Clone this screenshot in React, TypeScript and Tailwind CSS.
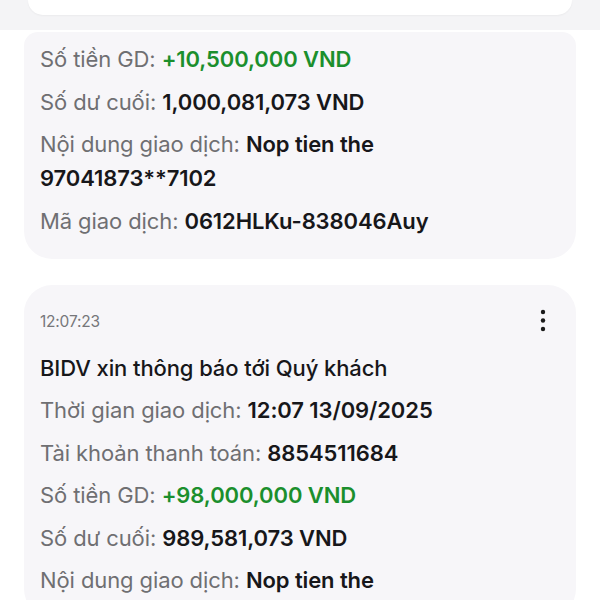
import React from 'react';

type Row = { label: string; value: string; green?: boolean };

const card1: Row[] = [
  { label: 'Số tiền GD:', value: '+10,500,000 VND', green: true },
  { label: 'Số dư cuối:', value: '1,000,081,073 VND' },
  { label: 'Nội dung giao dịch:', value: 'Nop tien the 97041873**7102' },
  { label: 'Mã giao dịch:', value: '0612HLKu-838046Auy' },
];

const card2: Row[] = [
  { label: 'Thời gian giao dịch:', value: '12:07 13/09/2025' },
  { label: 'Tài khoản thanh toán:', value: '8854511684' },
  { label: 'Số tiền GD:', value: '+98,000,000 VND', green: true },
  { label: 'Số dư cuối:', value: '989,581,073 VND' },
  { label: 'Nội dung giao dịch:', value: 'Nop tien the' },
];

function InfoRow({ row }: { row: Row }) {
  const color = row.green ? 'text-[#1b8f2d]' : 'text-[#17171a]';
  const parts = row.value.length > 20 ? [row.value.slice(0, 12), row.value.slice(13)] : [row.value];
  return (
    <p className="text-[22px] leading-[34px] tracking-[-0.1px]">
      <span className="text-[#6f6f72]">{row.label}</span>{' '}
      {parts.map((p, i) => (
        <React.Fragment key={i}>
          {i > 0 && ' '}
          <span className={`font-semibold ${color}`}>{p}</span>
        </React.Fragment>
      ))}
    </p>
  );
}

// nút ba chấm
function MoreDots() {
  return (
    <svg width="8" height="26" viewBox="0 0 8 26" className="text-[#1a1a1a]">
      <circle cx="4" cy="4" r="2.2" fill="currentColor" />
      <circle cx="4" cy="12.5" r="2.2" fill="currentColor" />
      <circle cx="4" cy="21" r="2.2" fill="currentColor" />
    </svg>
  );
}

export default function App() {
  return (
    <div className="w-[600px] h-[600px] overflow-hidden bg-white" style={{ fontFamily: 'Inter, "Noto Sans", sans-serif' }}>
      {/* phần trên */}
      <div className="h-[30px] bg-[#f4f4f6] px-[28px]">
        <div className="h-[15px] bg-white rounded-b-[24px] shadow-[0_1px_2px_rgba(0,0,0,0.04)]" />
      </div>

      <div className="mx-[24px] mt-[2px] bg-[#f7f6f9] rounded-t-[14px] rounded-b-[28px] pl-[16px] pr-[40px] pt-[10px] pb-[21px] flex flex-col gap-[8.5px]">
        {card1.map((r, i) => (
          <InfoRow key={i} row={r} />
        ))}
      </div>

      <div className="mx-[24px] mt-[26px] bg-[#f7f6f9] rounded-[28px] pl-[16px] pr-[28px] pt-[25px] pb-[20px]">
        <div className="flex items-start justify-between">
          <span className="text-[15.5px] leading-[24px] text-[#76767a] tracking-[-0.2px]">12:07:23</span>
          <div className="mr-[1px] mt-[-2px]">
            <MoreDots />
          </div>
        </div>
        <p className="mt-[17px] text-[22px] leading-[34px] font-medium text-[#17171a] tracking-[-0.1px]">
          BIDV xin thông báo tới Quý khách
        </p>
        <div className="mt-[8.5px] flex flex-col gap-[8.5px]">
          {card2.map((r, i) => (
            <InfoRow key={i} row={r} />
          ))}
        </div>
      </div>
    </div>
  );
}
